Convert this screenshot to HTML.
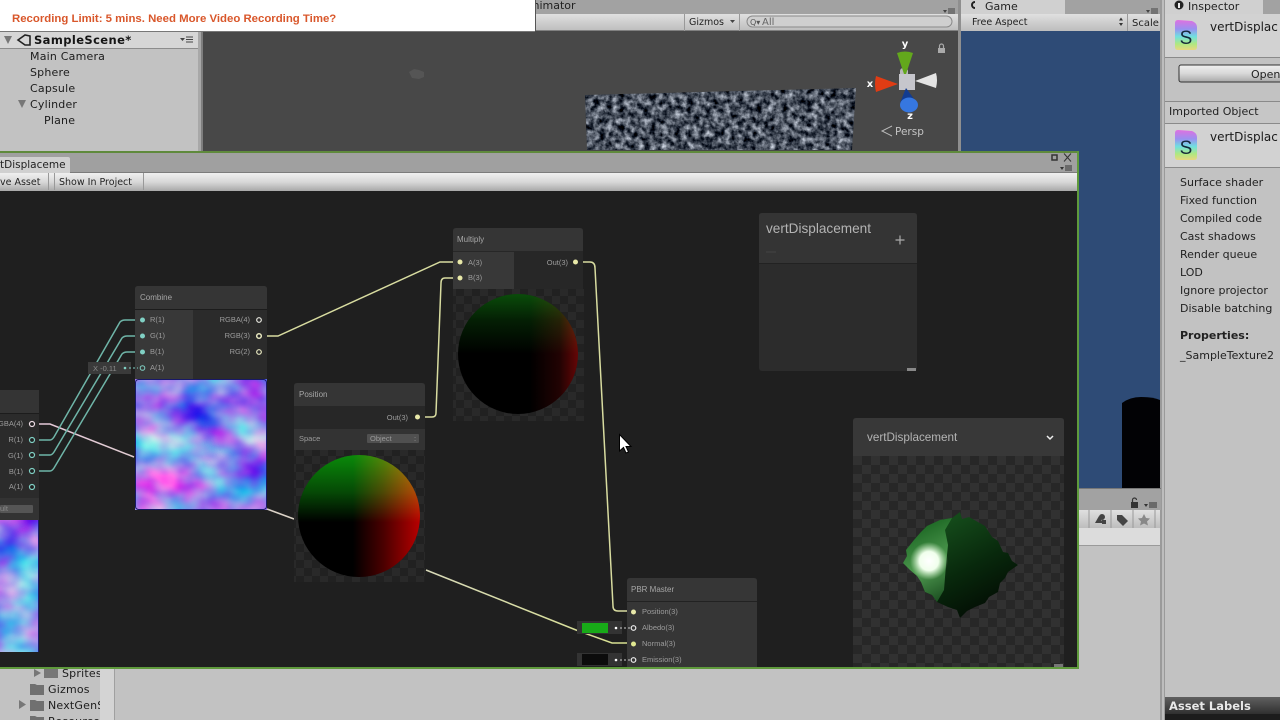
<!DOCTYPE html>
<html><head><meta charset="utf-8"><style>
html,body{margin:0;padding:0;background:#c2c2c2;width:1280px;height:720px;overflow:hidden}
svg{display:block;filter:blur(.3px)}
text{font-family:"DejaVu Sans","Liberation Sans",sans-serif}
.u{font-size:11px;fill:#1c1c1c;letter-spacing:.2px}
.n{font-family:"Liberation Sans",sans-serif;font-size:7.5px;fill:#9c9c9c}
.t{font-family:"Liberation Sans",sans-serif;font-size:8.5px;fill:#a6a6a6}
</style></head><body>
<svg width="1280" height="720" viewBox="0 0 1280 720" xmlns="http://www.w3.org/2000/svg">
<defs>
<pattern id="c" width="16" height="16" patternUnits="userSpaceOnUse"><rect width="16" height="16" fill="#212121"/><rect width="8" height="8" fill="#292929"/><rect x="8" y="8" width="8" height="8" fill="#292929"/></pattern>
<pattern id="c2" width="18" height="18" patternUnits="userSpaceOnUse" x="853" y="456"><rect width="18" height="18" fill="#272727"/><rect width="9" height="9" fill="#313131"/><rect x="9" y="9" width="9" height="9" fill="#313131"/></pattern>
<linearGradient id="tb" x1="0" y1="0" x2="0" y2="1"><stop offset="0" stop-color="#e0e0e0"/><stop offset="1" stop-color="#bdbdbd"/></linearGradient>
<linearGradient id="rb" x1="0" y1="0" x2="0" y2="1"><stop offset="0" stop-color="#f0f0f0"/><stop offset=".5" stop-color="#d8d8d8"/><stop offset="1" stop-color="#a8a8a8"/></linearGradient>
<linearGradient id="sh" x1="0" y1="0" x2="0" y2="1"><stop offset="0" stop-color="#e070e0"/><stop offset=".3" stop-color="#9a90f0"/><stop offset=".55" stop-color="#70e0e0"/><stop offset=".8" stop-color="#b0e880"/><stop offset="1" stop-color="#e8d880"/></linearGradient>
<linearGradient id="al" x1="0" y1="0" x2="0" y2="1"><stop offset="0" stop-color="#606060"/><stop offset="1" stop-color="#303030"/></linearGradient>
<linearGradient id="sg" x1="0" y1="0" x2="0" y2="1"><stop offset="0" stop-color="#0a8a0a"/><stop offset=".3" stop-color="#064a06"/><stop offset=".55" stop-color="#000"/></linearGradient>
<linearGradient id="sr" x1="0" y1="0" x2="1" y2="0"><stop offset=".45" stop-color="#000"/><stop offset=".7" stop-color="#4a0000"/><stop offset="1" stop-color="#b80000"/></linearGradient>
<linearGradient id="mg" x1="0" y1="0" x2="0" y2="1"><stop offset="0" stop-color="#0a4c0a"/><stop offset=".22" stop-color="#041f04"/><stop offset=".5" stop-color="#000"/></linearGradient>
<linearGradient id="mr" x1="0" y1="0" x2="1" y2="0"><stop offset=".6" stop-color="#000"/><stop offset=".85" stop-color="#220303"/><stop offset="1" stop-color="#660606"/></linearGradient>
<linearGradient id="w1" gradientUnits="userSpaceOnUse" x1="38" y1="424" x2="627" y2="643"><stop offset="0" stop-color="#e4c8d8"/><stop offset=".6" stop-color="#d8d8c0"/><stop offset="1" stop-color="#d8e090"/></linearGradient>
<linearGradient id="lit" gradientUnits="userSpaceOnUse" x1="915" y1="530" x2="950" y2="600"><stop offset="0" stop-color="#1f6a26"/><stop offset=".5" stop-color="#4f9a50"/><stop offset="1" stop-color="#16481c"/></linearGradient>
<linearGradient id="dk" gradientUnits="userSpaceOnUse" x1="950" y1="520" x2="1000" y2="610"><stop offset="0" stop-color="#144a1a"/><stop offset=".5" stop-color="#08280c"/><stop offset="1" stop-color="#020a03"/></linearGradient>
<radialGradient id="wh"><stop offset="0" stop-color="#fff"/><stop offset=".5" stop-color="#f0ffec"/><stop offset="1" stop-color="#c8ecc0" stop-opacity="0"/></radialGradient>
<filter id="nm" x="0" y="0" width="1" height="1" color-interpolation-filters="sRGB"><feTurbulence type="fractalNoise" baseFrequency="0.022 0.028" numOctaves="3" seed="7"/><feColorMatrix type="matrix" values="1.3 0 0 0 -.12  0 1.2 0 0 -.08  0 0 0 0 .92  0 0 0 0 1"/></filter>
<filter id="rock" x="0" y="0" width="1" height="1" color-interpolation-filters="sRGB"><feTurbulence type="fractalNoise" baseFrequency="0.16" numOctaves="6" seed="3"/><feColorMatrix type="matrix" values="1.3 0 0 0 -.36  1.3 0 0 0 -.33  1.3 0 0 0 -.28  0 0 0 0 1"/></filter>
<clipPath id="rk"><path d="M585 95L856 88L852 150H587Z"/></clipPath>
</defs>

<!-- top bars -->
<rect width="1280" height="720" fill="#c2c2c2"/>
<rect x="0" y="0" width="1165" height="14" fill="#a2a2a2"/>
<rect x="0" y="14" width="1165" height="17" fill="url(#tb)"/>
<rect x="0" y="30" width="1165" height="1" fill="#808080"/>

<!-- hierarchy -->
<rect x="0" y="31" width="198" height="120" fill="#c2c2c2"/>
<rect x="0" y="32" width="198" height="16" fill="#d6d6d6"/>
<rect x="0" y="48" width="198" height="1" fill="#8c8c8c"/>
<rect x="198" y="31" width="5" height="120" fill="#a8a8a8"/>
<rect x="201" y="31" width="2" height="120" fill="#7e7e7e"/>
<path d="M4 36H12L8 44Z" fill="#777"/>
<path d="M18 40L25 35L30 36V45L25 45L18 40Z" fill="none" stroke="#222" stroke-width="1.6"/>
<text x="34" y="44" style="font-size:11.5px;font-weight:bold;fill:#151515;letter-spacing:.4px">SampleScene*</text>
<path d="M180 38H185L182.500 41Z" fill="#444"/><path d="M186 37H193M186 39.500H193M186 42H193" stroke="#444"/>
<text class="u" x="30" y="60">Main Camera</text>
<text class="u" x="30" y="76">Sphere</text>
<text class="u" x="30" y="92">Capsule</text>
<path d="M18 100H26L22 108Z" fill="#777"/>
<text class="u" x="30" y="108">Cylinder</text>
<text class="u" x="44" y="124">Plane</text>

<!-- scene -->
<rect x="203" y="31" width="755" height="120" fill="#484848"/>
<path d="M409 72l5-3 5 1 5 2v5l-5 2-7-1z" fill="#555"/>
<rect x="585" y="88" width="272" height="63" fill="#30363e" filter="url(#rock)" clip-path="url(#rk)"/>
<rect x="958" y="0" width="3" height="151" fill="#8f8f8f"/>
<text x="554" y="9" style="font-size:11px;fill:#222" text-anchor="middle">nimator</text>
<path d="M943 10h4l-2 3z" fill="#444"/><path d="M948 9h7M948 11h7M948 13h7" stroke="#444"/>
<rect x="684" y="14" width="1" height="17" fill="#999"/><rect x="739" y="14" width="1" height="17" fill="#999"/>
<text x="689" y="25" style="font-size:9.5px;fill:#222">Gizmos</text>
<path d="M730 20h5l-2.500 3z" fill="#444"/>
<rect x="747" y="16" width="205" height="11" rx="5.500" fill="#cfcfcf" stroke="#8a8a8a"/>
<text x="750" y="25" style="font-size:8px;fill:#555">Q▾</text>
<text x="762" y="25" style="font-size:10px;fill:#666">All</text>
<!-- gizmo -->
<rect x="900" y="68" width="8" height="10" rx="3" fill="#b8b8b8"/>
<path d="M897 53Q905 50 913 53L905 77Z" fill="#63a81c"/>
<path d="M876 76Q874 84 876 92L898 84Z" fill="#e03c14"/>
<path d="M936 73Q938 80 936 88L915 81Z" fill="#e4e4e4"/>
<rect x="899" y="74" width="16" height="16" fill="#c6c6cc"/>
<path d="M906 88L900 103H917Z" fill="#123c90"/>
<ellipse cx="909" cy="105" rx="9" ry="7.500" fill="#3677e0"/>
<text x="905" y="47" text-anchor="middle" style="font-size:10px;font-weight:bold;fill:#fff">y</text>
<text x="870" y="87" text-anchor="middle" style="font-size:10px;font-weight:bold;fill:#fff">x</text>
<text x="910" y="119" text-anchor="middle" style="font-size:10px;font-weight:bold;fill:#fff">z</text>
<path d="M892 126L882 131L892 136" fill="none" stroke="#bcbcbc"/>
<text x="895" y="135" style="font-size:10.5px;fill:#c4c4c4">Persp</text>
<rect x="938" y="48" width="7" height="5" fill="#aaa"/><path d="M939.500 48v-2a2 2 0 0 1 4 0v2" fill="none" stroke="#aaa" stroke-width="1.200"/>

<!-- game -->
<rect x="961" y="0" width="104" height="14" fill="#d0d0d0"/>
<rect x="1065" y="0" width="95" height="14" fill="#a2a2a2"/>
<path d="M975 2a3 3 0 1 0 0 6" fill="none" stroke="#222" stroke-width="2"/>
<text x="985" y="10" style="font-size:11px;fill:#222">Game</text>
<path d="M1146 10h4l-2 3z" fill="#444"/><path d="M1151 9h7M1151 11h7M1151 13h7" stroke="#444"/>
<rect x="961" y="14" width="199" height="17" fill="url(#tb)"/>
<text x="972" y="25" style="font-size:9.500px;fill:#222">Free Aspect</text>
<path d="M1119 20.500l2-3 2 3zM1119 23l2 3 2-3z" fill="#333"/>
<rect x="1127" y="14" width="1" height="17" fill="#999"/>
<text x="1132" y="26" style="font-size:10px;fill:#222">Scale</text>
<rect x="961" y="31" width="199" height="458" fill="#2e4b76"/>
<path d="M1122 489V403Q1130 397 1141 397Q1153 397 1160 400V489Z" fill="#020205"/>
<rect x="1160" y="0" width="5" height="720" fill="#9a9a9a"/>
<rect x="1162" y="0" width="2" height="720" fill="#bdbdbd"/>

<!-- below game -->
<rect x="1078" y="489" width="83" height="21" fill="#a2a2a2"/>
<rect x="1078" y="488" width="83" height="1" fill="#777"/>
<rect x="1131" y="502" width="7" height="6" fill="#333"/><path d="M1132.500 502v-2a2 2 0 0 1 4 0" fill="none" stroke="#333" stroke-width="1.200"/>
<path d="M1144 504h4l-2 3z" fill="#333"/><path d="M1149 503h8M1149 505h8M1149 507h8" stroke="#333"/>
<rect x="1078" y="510" width="82" height="18" fill="url(#tb)"/>
<rect x="1078" y="528" width="82" height="17" fill="#dcdcdc"/>
<rect x="1078" y="545" width="82" height="1" fill="#9a9a9a"/>
<path d="M1089 510v18M1111 510v18M1133 510v18M1155 510v18" stroke="#999"/>
<path d="M1095 523l4-7 4 7z" fill="#444"/><circle cx="1102" cy="517" r="3" fill="#444"/><rect x="1102" y="520" width="4" height="4" fill="#444"/>
<path d="M1117 515h5l6 6-5 5-6-6z" fill="#444"/>
<path d="M1144 514l2 4 4 .500-3 3 1 4-4-2-4 2 1-4-3-3 4-.500z" fill="#888"/>

<!-- inspector -->
<rect x="1165" y="0" width="115" height="14" fill="#a2a2a2"/>
<rect x="1165" y="0" width="98" height="14" fill="#d0d0d0"/>
<circle cx="1179" cy="5" r="4.500" fill="#222"/><rect x="1178" y="3" width="2" height="5" fill="#eee"/>
<text x="1188" y="10" style="font-size:11px;fill:#222">Inspector</text>
<rect x="1165" y="14" width="115" height="43" fill="#d2d2d2"/>
<rect x="1165" y="57" width="115" height="1" fill="#8a8a8a"/>
<path d="M1175 23Q1175 20 1178 20L1192 21Q1197 23 1197 27V47Q1197 50 1194 50H1178Q1175 50 1175 47Z" fill="url(#sh)"/>
<text x="1186" y="44" text-anchor="middle" style="font-size:19px;font-family:'Liberation Sans',sans-serif;fill:#14283a">S</text>
<text x="1210" y="31" style="font-size:12px;fill:#1a1a1a">vertDisplac</text>
<rect x="1165" y="58" width="115" height="43" fill="#c2c2c2"/>
<rect x="1179" y="65" width="110" height="17" rx="2" fill="url(#rb)" stroke="#333"/>
<text x="1251" y="78" style="font-size:11px;fill:#222">Open</text>
<rect x="1165" y="101" width="115" height="1" fill="#8a8a8a"/>
<rect x="1165" y="102" width="115" height="21" fill="#c6c6c6"/>
<text x="1169" y="115" style="font-size:11px;fill:#222">Imported Object</text>
<rect x="1165" y="123" width="115" height="1" fill="#8a8a8a"/>
<rect x="1165" y="124" width="115" height="43" fill="#d2d2d2"/>
<rect x="1165" y="167" width="115" height="1" fill="#8a8a8a"/>
<path d="M1175 133Q1175 130 1178 130L1192 131Q1197 133 1197 137V157Q1197 160 1194 160H1178Q1175 160 1175 157Z" fill="url(#sh)"/>
<text x="1186" y="154" text-anchor="middle" style="font-size:19px;font-family:'Liberation Sans',sans-serif;fill:#14283a">S</text>
<text x="1210" y="141" style="font-size:12px;fill:#1a1a1a">vertDisplac</text>
<g style="font-size:11px;fill:#222">
<text x="1180" y="186">Surface shader</text>
<text x="1180" y="204">Fixed function</text>
<text x="1180" y="222">Compiled code</text>
<text x="1180" y="240">Cast shadows</text>
<text x="1180" y="258">Render queue</text>
<text x="1180" y="276">LOD</text>
<text x="1180" y="294">Ignore projector</text>
<text x="1180" y="312">Disable batching</text>
<text x="1180" y="339" style="font-weight:bold">Properties:</text>
<text x="1180" y="359">_SampleTexture2</text>
</g>
<rect x="1165" y="697" width="115" height="17" fill="url(#al)"/>
<rect x="1165" y="714" width="115" height="6" fill="#1c1c1c"/>
<text x="1169" y="710" style="font-size:11.500px;font-weight:bold;fill:#e8e8e8">Asset Labels</text>

<!-- banner -->
<rect x="0" y="0" width="535" height="31" fill="#fff"/>
<rect x="0" y="31" width="535" height="1" fill="#777"/>
<rect x="535" y="0" width="1" height="31" fill="#555"/>
<text x="12" y="22" style="font-family:'Liberation Sans',sans-serif;font-size:11.4px;font-weight:bold;fill:#d9572b">Recording Limit: 5 mins. Need More Video Recording Time?</text>

<!-- project panel -->
<path d="M34 669l7 4-7 4z" fill="#777"/>
<path d="M44 668h14v10H44z" fill="#777"/><text class="u" x="62" y="677">Sprites</text>
<path d="M30 684h5l2 1h7v10H30z" fill="#707070"/><text class="u" x="48" y="693">Gizmos</text>
<path d="M19 700l7 4.500-7 4.500z" fill="#777"/>
<path d="M30 700h5l2 1h7v10H30z" fill="#707070"/><text class="u" x="48" y="709">NextGenS</text>
<path d="M30 716h5l2 1h7v3H30z" fill="#707070"/><text class="u" x="48" y="725">Resources</text>
<rect x="100" y="668" width="14" height="52" fill="#d4d4d4"/>
<rect x="114" y="668" width="1" height="52" fill="#a0a0a0"/>

<!-- window -->
<rect x="0" y="151" width="1078" height="2" fill="#5f8a3c"/>
<rect x="0" y="153" width="1077" height="20" fill="#a0a0a0"/>
<rect x="0" y="172" width="1077" height="1" fill="#7c7c7c"/>
<path d="M0 157H68Q70 157 70 159V173H0Z" fill="#d0d0d0"/>
<text x="0" y="168" style="font-size:10.500px;fill:#222">tDisplaceme</text>
<rect x="1052" y="155" width="5" height="5" fill="none" stroke="#333" stroke-width="1.500"/>
<path d="M1064 153.500l7 8m0-8l-7 8" stroke="#333" fill="none"/>
<path d="M1060 167h4l-2 3z" fill="#333"/><path d="M1065 166h7M1065 168h7M1065 170h7" stroke="#333"/>
<rect x="0" y="173" width="1077" height="18" fill="url(#rb)"/>
<text x="0" y="185" style="font-size:9.500px;fill:#222">ve Asset</text>
<path d="M48.500 173v17M54.500 173v17M143.500 173v17" stroke="#999"/>
<text x="59" y="185" style="font-size:9.500px;fill:#222">Show In Project</text>
<rect x="0" y="191" width="1077" height="476" fill="#1f1f1f"/>
<rect x="0" y="667" width="1079" height="2" fill="#5f9a3c"/>
<rect x="1077" y="151" width="2" height="518" fill="#5f9a3c"/>

<!-- wires -->
<g fill="none" stroke-width="1.500">
<path d="M38 424H50L134 457M267 509L294 519M426 570L576 630L612 643H627" stroke="url(#w1)"/>
<g stroke="#6fb5a8">
<path d="M38 440H50Q52 440 54 437L120 322Q122 320 125 320H135"/>
<path d="M38 455H50Q52 455 54 452L122 338Q124 336 127 336H135"/>
<path d="M38 471H50Q52 471 54 468L122 354Q124 352 127 352H135"/>
</g>
<g stroke="#d8dca0">
<path d="M267 336H278L440 262H455"/>
<path d="M425 417H432Q436 417 436 413L441 283Q441 278 445 278H455"/>
<path d="M583 262H590Q595 262 595 268L613 606Q613 611 618 611H627"/>
</g>
</g>

<!-- left sample node -->
<path d="M0 390H36Q39 390 39 393V652H0Z" fill="#2b2b2b"/>
<rect x="0" y="390" width="39" height="23" fill="#343434"/>
<rect x="0" y="413" width="39" height="1" fill="#1c1c1c"/>
<rect x="0" y="498" width="39" height="22" fill="#333"/>
<rect x="0" y="505" width="33" height="8" rx="1" fill="#555"/>
<text class="n" x="0" y="511" style="fill:#888">ult</text>
<g class="n">
<text class="n" x="23" y="426" text-anchor="end">RGBA(4)</text>
<text class="n" x="23" y="442" text-anchor="end">R(1)</text>
<text class="n" x="23" y="458" text-anchor="end">G(1)</text>
<text class="n" x="23" y="474" text-anchor="end">B(1)</text>
<text class="n" x="23" y="489" text-anchor="end">A(1)</text>
</g>
<g fill="#1f1f1f" stroke-width="1.200">
<circle cx="32" cy="424" r="2.500" stroke="#ecdce4"/>
<circle cx="32" cy="440" r="2.500" stroke="#80d0c4"/>
<circle cx="32" cy="455" r="2.500" stroke="#80d0c4"/>
<circle cx="32" cy="471" r="2.500" stroke="#80d0c4"/>
<circle cx="32" cy="487" r="2.500" stroke="#80d0c4"/>
</g>
<rect x="-140" y="520" width="179" height="132" filter="url(#nm)"/>
<rect x="38" y="520" width="1" height="132" fill="#1a1a70"/>

<!-- combine node -->
<rect x="135" y="286" width="132" height="224" rx="3" fill="#2b2b2b"/>
<path d="M135 309V289Q135 286 138 286H264Q267 286 267 289V309Z" fill="#353535"/>
<rect x="135" y="309" width="132" height="1" fill="#1c1c1c"/>
<rect x="135" y="310" width="58" height="69" fill="#383838"/>
<text class="t" x="140" y="300" style="font-size:8px">Combine</text>
<g class="n">
<text class="n" x="150" y="322">R(1)</text><text class="n" x="150" y="338">G(1)</text><text class="n" x="150" y="354">B(1)</text><text class="n" x="150" y="370">A(1)</text>
<text class="n" x="250" y="322" text-anchor="end">RGBA(4)</text><text class="n" x="250" y="338" text-anchor="end">RGB(3)</text><text class="n" x="250" y="354" text-anchor="end">RG(2)</text>
</g>
<circle cx="142.500" cy="320" r="2.500" fill="#80d0c4"/><circle cx="142.500" cy="336" r="2.500" fill="#80d0c4"/><circle cx="142.500" cy="352" r="2.500" fill="#80d0c4"/>
<circle cx="142.500" cy="368" r="2.300" fill="none" stroke="#80d0c4"/>
<circle cx="259" cy="320" r="2.300" fill="none" stroke="#e8e8e0" stroke-width="1.200"/>
<circle cx="259" cy="336" r="2.300" fill="#222" stroke="#e8e8c0" stroke-width="1.500"/>
<circle cx="259" cy="352" r="2.300" fill="none" stroke="#e8e8c0" stroke-width="1.200"/>
<rect x="88" y="362" width="43" height="12" fill="#3a3a3a"/>
<text class="n" x="93" y="371" style="fill:#888">X -0.11</text>
<circle cx="125" cy="368" r="1.300" fill="#80d0c4"/><path d="M129 368H138" stroke="#80d0c4" stroke-dasharray="2 2"/>
<rect x="135" y="379" width="132" height="131" rx="2" filter="url(#nm)"/>
<rect x="135.500" y="379.500" width="131" height="130" rx="3" fill="none" stroke="#181868"/>

<!-- position node -->
<path d="M294 406V386Q294 383 297 383H422Q425 383 425 386V406Z" fill="#353535"/>
<rect x="294" y="406" width="131" height="23" fill="#272727"/>
<rect x="294" y="429" width="131" height="21" fill="#333"/>
<rect x="294" y="450" width="131" height="132" fill="url(#c)"/>
<text class="t" x="299" y="397" style="font-size:8px">Position</text>
<text class="n" x="408" y="420" text-anchor="end">Out(3)</text>
<circle cx="417.500" cy="417" r="2.500" fill="#e8e8a8"/>
<text class="n" x="299" y="441">Space</text>
<rect x="367" y="434" width="52" height="9" rx="1" fill="#505050"/>
<text class="n" x="370" y="441" style="fill:#999">Object</text><text class="n" x="414" y="441">:</text>
<circle cx="359" cy="516" r="61" fill="#000"/>
<circle cx="359" cy="516" r="61" fill="url(#sg)" style="mix-blend-mode:screen"/>
<circle cx="359" cy="516" r="61" fill="url(#sr)" style="mix-blend-mode:screen"/>

<!-- multiply node -->
<path d="M453 251V231Q453 228 456 228H580Q583 228 583 231V251Z" fill="#353535"/>
<rect x="453" y="251" width="130" height="38" fill="#272727"/>
<rect x="453" y="252" width="61" height="37" fill="#383838"/>
<rect x="453" y="289" width="131" height="132" fill="url(#c)"/>
<text class="t" x="457" y="242" style="font-size:8px">Multiply</text>
<text class="n" x="468" y="265">A(3)</text><text class="n" x="468" y="280">B(3)</text>
<text class="n" x="568" y="265" text-anchor="end">Out(3)</text>
<circle cx="460" cy="262" r="2.500" fill="#e8e8a8"/><circle cx="460" cy="278" r="2.500" fill="#e8e8a8"/><circle cx="575.500" cy="262" r="2.500" fill="#e8e8a8"/>
<circle cx="518" cy="354" r="60" fill="#000"/>
<circle cx="518" cy="354" r="60" fill="url(#mg)" style="mix-blend-mode:screen"/>
<circle cx="518" cy="354" r="60" fill="url(#mr)" style="mix-blend-mode:screen"/>

<!-- blackboard -->
<rect x="759" y="213" width="158" height="158" rx="3" fill="#2c2c2c"/>
<path d="M759 263V216Q759 213 762 213H914Q917 213 917 216V263Z" fill="#343434"/>
<rect x="759" y="263" width="158" height="1" fill="#222"/>
<text x="766" y="233" style="font-family:'Liberation Sans',sans-serif;font-size:13.6px;fill:#b4b4b4">vertDisplacement</text>
<path d="M766 252H776" stroke="#444"/>
<path d="M895.500 240H904.500M900 235.500V244.500" stroke="#aaa" stroke-width="1.200"/>
<rect x="907" y="368" width="9" height="3" fill="#888"/>

<!-- preview -->
<rect x="853" y="456" width="211" height="211" fill="url(#c2)"/>
<path d="M853 456V421Q853 418 856 418H1061Q1064 418 1064 421V456Z" fill="#383838"/>
<text x="867" y="441" style="font-family:'Liberation Sans',sans-serif;font-size:11.7px;fill:#b4b4b4">vertDisplacement</text>
<path d="M1047 436L1050 439L1053 436" fill="none" stroke="#eee" stroke-width="1.500"/>
<path d="M960 512L962 519L969 517L985 526L992 537L998 541L1003 552L1008 553L1012 561L1018 565L1008 572L1005 578L1000 583L998 592L989 597L985 603L975 607L967 611L960 618L957 610L948 607L937 602L932 595L925 592L921 582L917 576L910 570L903 563L907 556L906 550L914 540L921 532L927 526L940 520L952 518Z" fill="url(#dk)"/>
<path d="M952 518L945 530L948 545L946 565L944 590L937 602L932 595L925 592L921 582L917 576L910 570L903 563L907 556L906 550L914 540L921 532L927 526L940 520Z" fill="url(#lit)"/>
<ellipse cx="929" cy="561" rx="19" ry="19" fill="url(#wh)"/>
<rect x="1054" y="664" width="9" height="3" fill="#777"/>

<!-- PBR master -->
<path d="M627 667V581Q627 578 630 578H754Q757 578 757 581V667Z" fill="#363636"/>
<rect x="627" y="601" width="130" height="1" fill="#222"/>
<text class="t" x="631" y="592" style="font-size:8px">PBR Master</text>
<text class="n" x="642" y="614">Position(3)</text><text class="n" x="642" y="630">Albedo(3)</text><text class="n" x="642" y="646">Normal(3)</text><text class="n" x="642" y="662">Emission(3)</text>
<circle cx="633.500" cy="612" r="2.500" fill="#e8e8a8"/>
<circle cx="633.500" cy="628" r="2.300" fill="none" stroke="#eee" stroke-width="1.200"/>
<circle cx="633.500" cy="644" r="2.500" fill="#e0e890"/>
<circle cx="633.500" cy="660" r="2.300" fill="none" stroke="#eee" stroke-width="1.200"/>
<rect x="577" y="621" width="45" height="13" fill="#333"/>
<rect x="582" y="623" width="26" height="10" fill="#18aa18"/>
<circle cx="616" cy="628" r="1.300" fill="#fff"/><path d="M620 628H630" stroke="#ccc" stroke-dasharray="2 2"/>
<rect x="577" y="653" width="45" height="13" fill="#333"/>
<rect x="582" y="654" width="26" height="11" fill="#0c0c0c"/>
<circle cx="616" cy="660" r="1.300" fill="#fff"/><path d="M620 660H630" stroke="#ccc" stroke-dasharray="2 2"/>

<!-- cursor -->
<path d="M619.500 434.500V451L623.500 447.500L626 453L628.500 452L626 446.500H631Z" fill="#fff" stroke="#000" stroke-width="1"/>
</svg>
</body></html>
